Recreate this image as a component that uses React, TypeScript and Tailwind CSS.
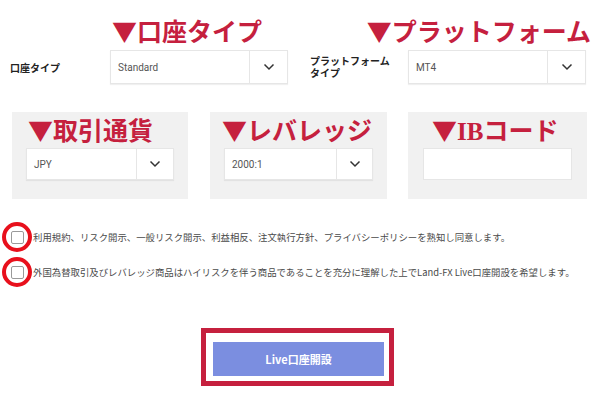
import React from "react";

const jp = "font-['Noto_Sans_CJK_JP','Noto_Sans',sans-serif]";

function Chevron() {
  return (
    <svg width="12" height="8" viewBox="0 0 12 8" fill="none">
      <polyline points="1.5,1.5 6,6 10.5,1.5" stroke="#333" strokeWidth="1.5" />
    </svg>
  );
}

function Select({ value, arrow = 38, h = 34 }: { value: string; arrow?: number; h?: number }) {
  return (
    <div
      className="flex w-full border border-[#e6e6e6] bg-white shadow-[0_1px_1px_rgba(0,0,0,0.06)]"
      style={{ height: h }}
    >
      <div className="flex flex-1 items-center pl-[7px] font-['Roboto','Liberation_Sans',sans-serif] text-[10px] text-[#555]">
        {value}
      </div>
      <div
        className="flex items-center justify-center border-l border-[#e6e6e6]"
        style={{ width: arrow }}
      >
        <Chevron />
      </div>
    </div>
  );
}

function Heading({ children, className = "" }: { children: React.ReactNode; className?: string }) {
  return (
    <div
      className={`${jp} whitespace-nowrap text-[25px] font-bold text-[#c5203e] ${className}`}
    >
      {children}
    </div>
  );
}

function Check({ text }: { text: React.ReactNode }) {
  return (
    <div className="flex h-[30px] items-center">
      <div className="ml-[2px] flex h-[30px] w-[30px] shrink-0 items-center justify-center rounded-full border-[4px] border-[#e8101c]">
        <div className="h-[13px] w-[13px] rounded-[2px] border border-[#9a9a9a] bg-white" />
      </div>
      <span className={`${jp} ml-[1px] whitespace-nowrap text-[9.4px] text-[#4a4a4a]`}>{text}</span>
    </div>
  );
}

export default function App() {
  return (
    <div className={`h-[397px] w-[600px] overflow-hidden bg-white ${jp}`}>
      {/* row 1 */}
      <div className="flex h-[100px]">
        <div className="flex w-[300px] items-end pb-[16px]">
          <div className="flex h-[34px] w-[110px] items-center pl-[10px] text-[10px] font-bold text-[#222]">
            口座タイプ
          </div>
          <div className="flex w-[178px] flex-col">
            <Heading className="mb-[4px] h-[32px] pl-[2px] leading-[32px]">▼口座タイプ</Heading>
            <Select value="Standard" />
          </div>
        </div>
        <div className="flex w-[300px] items-end pb-[16px]">
          <div className="flex h-[34px] w-[108px] flex-col justify-center pl-[10px] text-[10px] font-bold leading-[12px] text-[#222]">
            <span>プラットフォーム</span>
            <span>タイプ</span>
          </div>
          <div className="flex w-[178px] flex-col">
            <Heading className="-mr-[5px] mb-[4px] flex h-[32px] justify-end leading-[32px]">
              <span>▼プラットフォーム</span>
            </Heading>
            <Select value="MT4" />
          </div>
        </div>
      </div>

      {/* row 2 */}
      <div className="mt-[12px] flex pl-[12px]">
        <div className="h-[87px] w-[176px] bg-[#f1f1f1] px-[14px] pt-[2px]">
          <Heading className="h-[30px] pl-[2px] leading-[30px]">▼取引通貨</Heading>
          <div className="mt-[4px]">
            <Select value="JPY" arrow={37} h={32} />
          </div>
        </div>
        <div className="ml-[22px] h-[87px] w-[177px] bg-[#f1f1f1] px-[14px] pt-[2px]">
          <Heading className="-ml-[2px] h-[30px] leading-[30px]">▼レバレッジ</Heading>
          <div className="mt-[4px]">
            <Select value="2000:1" arrow={36} h={32} />
          </div>
        </div>
        <div className="ml-[21px] h-[87px] w-[179px] bg-[#f1f1f1] px-[15px] pt-[2px]">
          <Heading className="h-[30px] pl-[9px] leading-[30px]">
            ▼<span className="font-['Liberation_Serif',serif]">IB</span>コード
          </Heading>
          <div className="mt-[4px] h-[32px] w-full border border-[#e6e6e6] bg-white" />
        </div>
      </div>

      {/* checkboxes */}
      <div className="mt-[23px] flex flex-col gap-[5px]">
        <Check text="利用規約、リスク開示、一般リスク開示、利益相反、注文執行方針、プライバシーポリシーを熟知し同意します。" />
        <Check text="外国為替取引及びレバレッジ商品はハイリスクを伴う商品であることを充分に理解した上でLand-FX Live口座開設を希望します。" />
      </div>

      {/* submit */}
      <div className="ml-[201px] mt-[41px] h-[58px] w-[193px] border-[5px] border-[#c5203e] pl-[7px] pt-[9px]">
        <button className="flex h-[34px] w-[171px] items-center justify-center bg-[#7b8ee0] text-[11px] font-bold text-white">
          Live口座開設
        </button>
      </div>
    </div>
  );
}
